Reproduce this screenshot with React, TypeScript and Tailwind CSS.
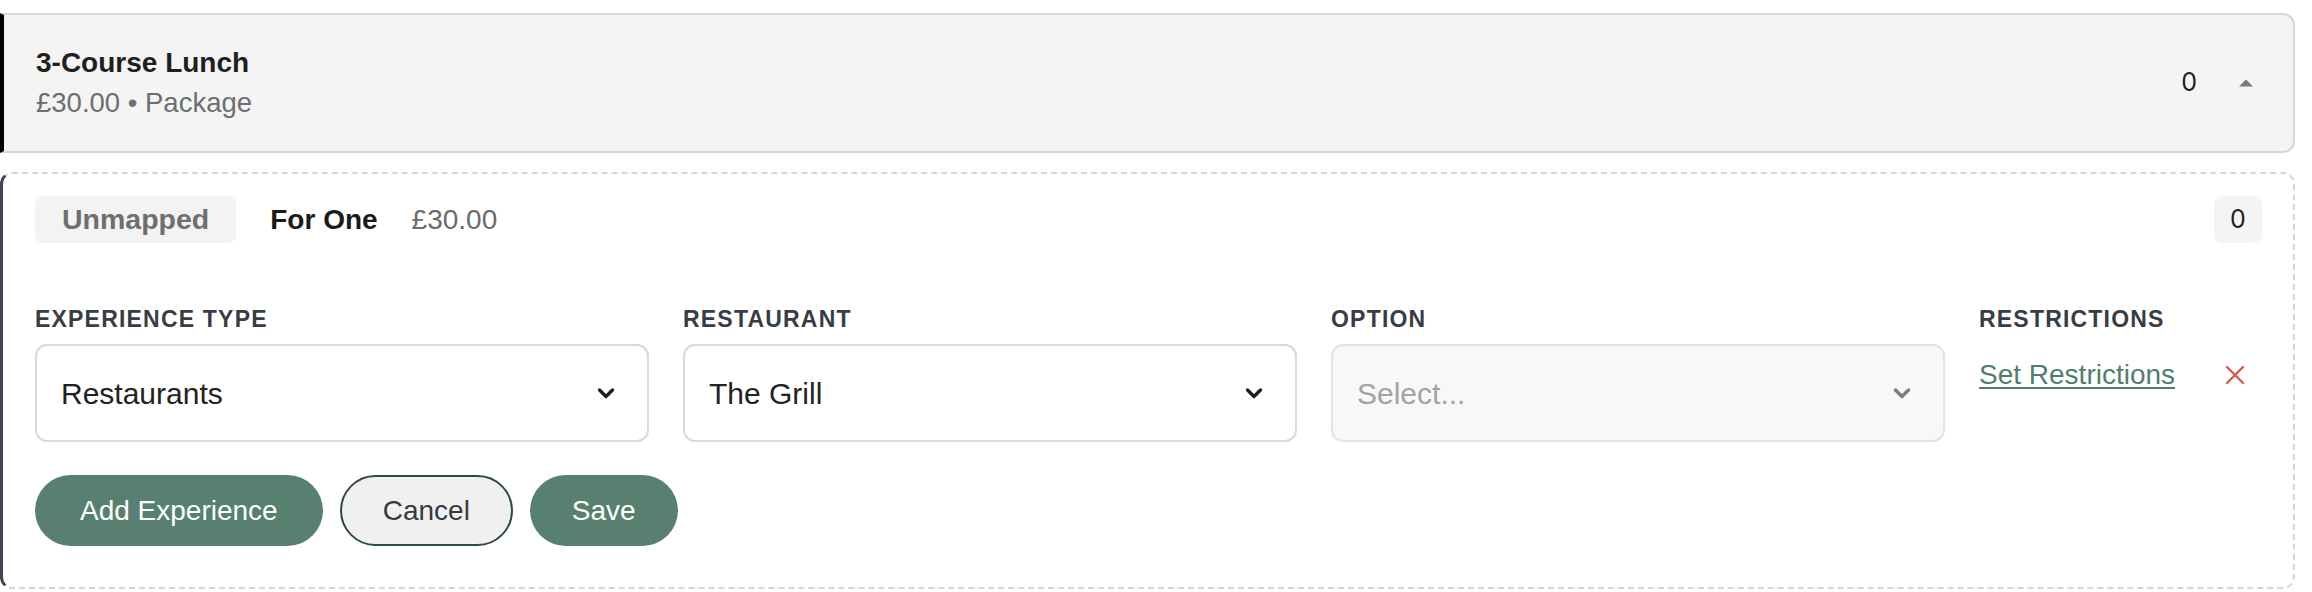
import type { ReactNode } from "react";

const sans = { fontFamily: '"Liberation Sans", Arial, sans-serif' };

function Chevron({ muted = false }: { muted?: boolean }) {
  return (
    <svg width="18" height="11" viewBox="0 0 18 11" aria-hidden="true" className="shrink-0">
      <polyline
        points="2.5,2 9,8.5 15.5,2"
        fill="none"
        stroke={muted ? "#7b7b7b" : "#1f1f1f"}
        strokeWidth="3.4"
        strokeLinecap="round"
        strokeLinejoin="round"
      />
    </svg>
  );
}

function Field({ label, children }: { label: string; children: ReactNode }) {
  return (
    <div className="flex flex-col gap-[9px]">
      <span className="text-[23px] leading-[32px] font-bold uppercase tracking-[1.2px] text-[#383d45]">{label}</span>
      {children}
    </div>
  );
}

function Select({ value, placeholder, disabled }: { value?: string; placeholder?: string; disabled?: boolean }) {
  return (
    <div
      className={
        disabled
          ? "flex h-[98px] items-center justify-between rounded-[12px] border-2 border-[#e3e3e7] bg-[#f8f8f8] pl-[24px] pr-[32px]"
          : "flex h-[98px] items-center justify-between rounded-[12px] border-2 border-[#d8d8dd] bg-white pl-[24px] pr-[32px]"
      }
    >
      <span className={value ? "text-[30px] text-[#222222]" : "text-[30px] text-[#a3a3a3]"}>{value ?? placeholder}</span>
      <Chevron muted={disabled} />
    </div>
  );
}

export default function App() {
  return (
    <div className="bg-white pr-[17px] pt-[13px]" style={sans}>
      {/* package row */}
      <div className="flex h-[140px] items-center justify-between rounded-r-[12px] border-2 border-l-4 border-[#d5d5da] border-l-black bg-[#f4f4f4] pl-[32px] pr-[40px]">
        <div className="flex flex-col">
          <span className="text-[28px] leading-[40px] font-bold text-[#1f1f1f]">3-Course Lunch</span>
          <span className="text-[27.5px] leading-[40px] text-[#6e6e6e]">£30.00 • Package</span>
        </div>
        <div className="flex items-center gap-[42px]">
          <span className="font-['Inter'] text-[25px] text-[#1f1f1f]">0</span>
          <svg width="14" height="8" viewBox="0 0 14 8" aria-hidden="true">
            <polygon points="7,0.5 14,7.5 0,7.5" fill="#7a7a7a" />
          </svg>
        </div>
      </div>

      {/* variant editor */}
      <div className="mt-[19px] rounded-[12px] border-2 border-dashed border-[#d6d6db] border-l-[3px] border-l-[#3f4550] pb-[41px] pl-[32px] pr-[31px] pt-[22px] [border-left-style:solid]">
        <div className="flex items-center justify-between">
          <div className="flex items-center gap-[34px]">
            <span className="flex h-[47px] items-center rounded-[8px] bg-[#f3f3f3] px-[27px] text-[28.5px] font-bold text-[#6f6f6f]">
              Unmapped
            </span>
            <span className="text-[28px] font-bold text-[#1a1a1a]">For One</span>
            <span className="text-[28px] text-[#6b6b6b]">£30.00</span>
          </div>
          <span className="flex h-[47px] w-[48px] items-center justify-center rounded-[8px] bg-[#f4f4f4] font-['Inter'] text-[25px] text-[#1f1f1f]">
            0
          </span>
        </div>

        <div className="mt-[60px] grid grid-cols-[614px_614px_614px_1fr] gap-x-[34px]">
          <Field label="Experience Type">
            <Select value="Restaurants" />
          </Field>
          <Field label="Restaurant">
            <Select value="The Grill" />
          </Field>
          <Field label="Option">
            <Select placeholder="Select..." disabled />
          </Field>
          <div className="flex flex-col">
            <span className="text-[23px] leading-[32px] font-bold uppercase tracking-[1.2px] text-[#383d45]">Restrictions</span>
            <div className="mt-[20px] flex items-center gap-[50px]">
              <a href="#" className="text-[28px] leading-[40px] text-[#4f7f6c] underline decoration-2 underline-offset-[3px]">
                Set Restrictions
              </a>
              <button type="button" aria-label="Remove experience" className="flex h-[20px] w-[20px] items-center justify-center">
                <svg width="20" height="20" viewBox="0 0 20 20" aria-hidden="true">
                  <path d="M2 2 18 18M18 2 2 18" stroke="#d65a4a" strokeWidth="2.4" strokeLinecap="round" />
                </svg>
              </button>
            </div>
          </div>
        </div>

        <div className="mt-[33px] flex items-center gap-[17px]">
          <button type="button" className="h-[71px] rounded-full bg-[#578070] px-[45px] text-[28px] text-white">
            Add Experience
          </button>
          <button type="button" className="h-[71px] rounded-full border-2 border-[#2f4a40] bg-[#f0f0f0] px-[41px] text-[28px] text-[#343a45]">
            Cancel
          </button>
          <button type="button" className="h-[71px] rounded-full bg-[#578070] px-[42px] text-[28px] text-white">
            Save
          </button>
        </div>
      </div>
    </div>
  );
}
